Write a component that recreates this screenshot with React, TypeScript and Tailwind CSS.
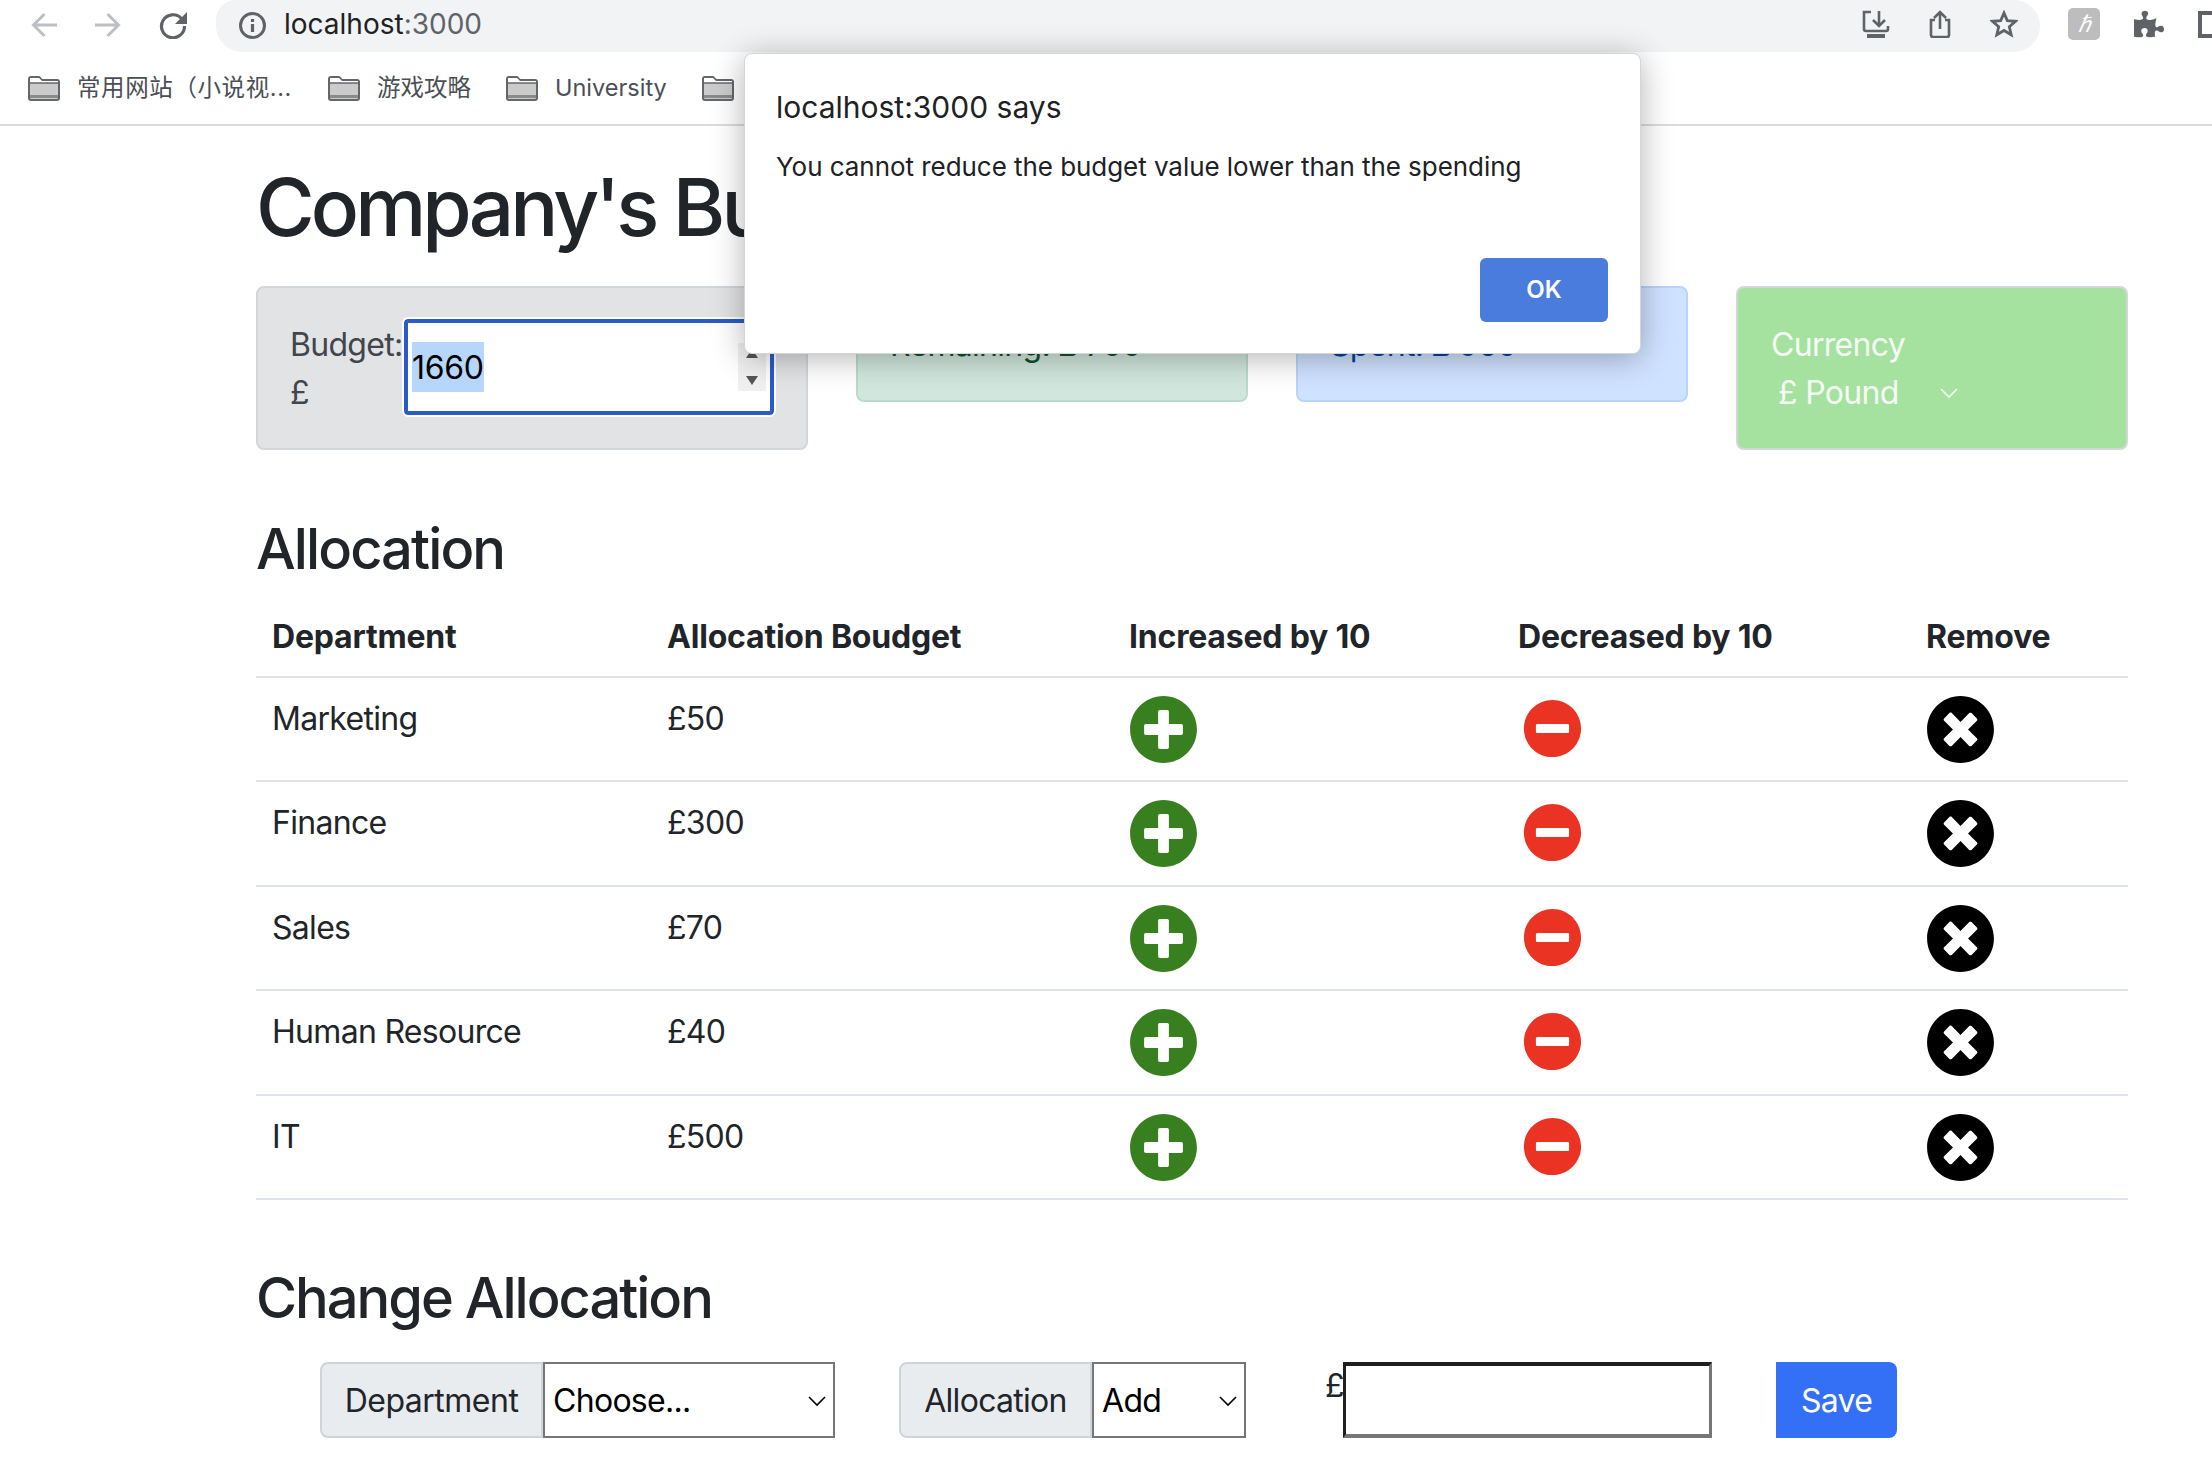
import React from "react";
import { FaPlusCircle, FaMinusCircle, FaTimesCircle, FaPuzzlePiece } from "react-icons/fa";

const rows = [
  { name: "Marketing", budget: 50 },
  { name: "Finance", budget: 300 },
  { name: "Sales", budget: 70 },
  { name: "Human Resource", budget: 40 },
  { name: "IT", budget: 500 },
];

const bookmarks = ["常用网站（小说视...", "游戏攻略", "University", ""];

function FolderIcon() {
  return (
    <svg width="32" height="25" viewBox="0 0 32 25" className="shrink-0">
      <path d="M1 3a2 2 0 0 1 2-2h8l3 3h15a2 2 0 0 1 2 2v16a2 2 0 0 1-2 2H3a2 2 0 0 1-2-2z" fill="#cbcbcb" stroke="#63666a" strokeWidth="2" />
      <path d="M2 2h9l3 3h16v2H2z" fill="#fff" />
      <path d="M1 7h30" stroke="#63666a" strokeWidth="1.5" />
      <path d="M2 20.5h28" stroke="#8a8a8a" strokeWidth="3" />
    </svg>
  );
}

function ChromeArrow({ flip }: { flip?: boolean }) {
  return (
    <svg width="26" height="26" viewBox="0 0 26 26" fill="none" stroke="#bcbfc4" strokeWidth="3" className={flip ? "shrink-0 -scale-x-100" : "shrink-0"}>
      <path d="M26 13H3M13.5 2 2.5 13l11 11" />
    </svg>
  );
}

function ChevronIcon({ className }: { className?: string }) {
  return (
    <svg width="20" height="12" viewBox="0 0 20 12" fill="none" stroke="currentColor" strokeWidth="1.6" className={className}>
      <path d="M2 2l8 8 8-8" />
    </svg>
  );
}

function BrowserBar() {
  return (
    <div className="border-b-2 border-[#dcdcdc]">
      <div className="flex h-[52px] items-center pl-[31px]">
        <div className="-mt-[2px] flex items-center">
          <ChromeArrow />
          <div className="ml-[38px]"><ChromeArrow flip /></div>
          <svg width="28" height="28" viewBox="0 0 28 28" fill="none" className="ml-[38px] shrink-0">
            <path d="M22.5 7.5A11.5 11.5 0 1 0 25.5 15" stroke="#5f6368" strokeWidth="3.2" />
            <path d="M28 1v12H16z" fill="#5f6368" />
          </svg>
        </div>
        <div className="ml-[29px] flex h-[52px] w-[1824px] shrink-0 items-center rounded-b-[40px] rounded-tr-[40px] rounded-tl-[30px] bg-[#f1f3f4] pl-[23px]">
          <svg width="27" height="27" viewBox="0 0 27 27" fill="none" stroke="#5f6368" className="-mt-[2px] shrink-0">
            <circle cx="13.5" cy="13.5" r="12" strokeWidth="3" />
            <path d="M13.5 12v8M13.5 7v3" strokeWidth="3.2" />
          </svg>
          <span className="ml-[18px] -mt-[4px] text-[28px] leading-[36px] tracking-normal">
            <span className="text-[#202124]">localhost</span>
            <span className="text-[#5f6368]">:3000</span>
          </span>
          <div className="ml-auto -mt-[4px] flex items-center gap-[39px] pr-[22px]">
            <svg width="28" height="28" viewBox="0 0 28 28" fill="none" stroke="#5f6368" strokeWidth="2.6">
              <path d="M9 2H2v17a2 2 0 0 0 2 2h20a2 2 0 0 0 2-2v-3" />
              <path d="M17 1v14M11 10l6 6 6-6" />
              <path d="M5 26h18" strokeWidth="4" />
            </svg>
            <svg width="22" height="28" viewBox="0 0 22 28" fill="none" stroke="#5f6368" strokeWidth="2.6">
              <path d="M6 10H2v15a2 2 0 0 0 2 2h14a2 2 0 0 0 2-2V10h-4" />
              <path d="M11 19V2M5 8l6-6 6 6" />
            </svg>
            <svg width="28" height="28" viewBox="0 0 28 28" fill="none" stroke="#5f6368" strokeWidth="2.8">
              <path d="M14 3l3.3 7.6 8.2.7-6.2 5.4 1.9 8.1L14 20.5l-7.2 4.3 1.9-8.1-6.2-5.4 8.2-.7z" />
            </svg>
          </div>
        </div>
        <div className="ml-[28px] -mt-[4px] flex h-[32px] w-[32px] shrink-0 items-center justify-center rounded-[5px] bg-[#bdbdbd] text-[22px] italic text-white">ℏ</div>
        <FaPuzzlePiece size={30} className="ml-[34px] -mt-[4px] shrink-0 text-[#5f6368]" />
        <div className="ml-[34px] -mt-[4px] h-[27px] w-[20px] shrink-0 border-4 border-[#5f6368]" />
      </div>
      <div className="flex h-[72px] items-center pl-[28px]">
        {bookmarks.map((label, i) => (
          <div key={i} className="mr-[35px] flex items-center gap-[17px]">
            <FolderIcon />
            {label && <span className={`whitespace-nowrap text-[23.5px] text-[#4b4f55] ${i === 0 ? "w-[216px] tracking-[0.6px]" : "tracking-[0px]"}`}>{label}</span>}
          </div>
        ))}
      </div>
    </div>
  );
}

function AlertDialog() {
  return (
    <div className="absolute left-[744px] top-[53px] h-[301px] w-[897px] rounded-[8px] border border-[#d5d5d5] bg-white pl-[31px] pr-[32px] pt-[34px] tracking-normal shadow-[0_4px_32px_rgba(0,0,0,0.3)]">
      <div className="text-[30px] leading-[38px] text-[#202124]">localhost:3000 says</div>
      <div className="mt-[23px] text-[26px] leading-[36px] tracking-[-0.05px] text-[#202124]">You cannot reduce the budget value lower than the spending</div>
      <div className="mt-[73px] flex justify-end">
        <button className="h-[64px] w-[128px] rounded-[6px] bg-[#4a7cde] text-[24px] font-semibold text-white">OK</button>
      </div>
    </div>
  );
}

function App() {
  return (
    <div className="relative h-[1480px] w-[2212px] overflow-hidden bg-white text-[32px] leading-[48px] tracking-[-0.7px] text-[#212529] [font-family:Inter,'Noto_Sans_CJK_SC',sans-serif]">
      <BrowserBar />
      <main className="pl-[256px] pt-[33px]">
        <h1 className="whitespace-nowrap text-[80px] font-medium leading-[96px] tracking-[-3.9px]">Company's Budget allocation</h1>

        <div className="mt-[31px] flex items-start gap-[48px]">
          <div className="flex h-[164px] w-[552px] rounded-[8px] border-2 border-[#d3d6d8] bg-[#e2e3e5] py-[31px] pl-[32px] pr-[32px] text-[#41464b]">
            <div className="w-[114px] shrink-0 pt-[2px]">Budget:<br />£</div>
            <div className="flex h-[96px] w-[370px] items-center justify-between rounded-[4px] border-[4px] border-[#2a5cc7] bg-white pl-[4px] pr-[4px] text-black tracking-[-0.3px] outline-2 outline-white">
              <span className="bg-[#b7d6fb] pt-[2px]">1660</span>
              <div className="flex h-[48px] w-[28px] flex-col items-center justify-between bg-[#f0f0f0] py-[6px]">
                <div className="h-0 w-0 border-x-[6px] border-b-[9px] border-x-transparent border-b-[#555]" />
                <div className="h-0 w-0 border-x-[6px] border-t-[9px] border-x-transparent border-t-[#555]" />
              </div>
            </div>
          </div>
          <div className="h-[116px] w-[392px] rounded-[8px] border-2 border-[#badbcc] bg-[#d1e7dd] px-[32px] py-[33px] text-[#0f5132]">Remaining: £ 700</div>
          <div className="h-[116px] w-[392px] rounded-[8px] border-2 border-[#b6d4fe] bg-[#cfe2ff] px-[32px] py-[33px] text-[#084298]">Spent: £ 960</div>
          <div className="h-[164px] w-[392px] rounded-[8px] border-2 border-[#d3d6d8] bg-[#a5e2a0] px-[33px] py-[33px] text-[#f6fbf5]">
            <div>Currency</div>
            <div className="flex items-center pl-[7px]">
              £ Pound
              <ChevronIcon className="ml-[40px]" />
            </div>
          </div>
        </div>

        <h3 className="mt-[66px] text-[56px] font-medium leading-[67px] tracking-[-1.9px]">Allocation</h3>

        <table className="mt-[15px] w-[1872px] table-fixed border-collapse">
          <thead>
            <tr className="border-b-2 border-[#dee2e6] text-left tracking-[-0.2px]">
              <th className="w-[395px] px-[16px] py-[15px] font-bold">Department</th>
              <th className="w-[462px] px-[16px] py-[15px] font-bold">Allocation Boudget</th>
              <th className="w-[389px] px-[16px] py-[15px] font-bold">Increased by 10</th>
              <th className="w-[408px] px-[16px] py-[15px] font-bold">Decreased by 10</th>
              <th className="px-[16px] py-[15px] font-bold">Remove</th>
            </tr>
          </thead>
          <tbody>
            {rows.map((r) => (
              <tr key={r.name} className="h-[104.4px] border-b-2 border-[#dee2e6] align-top">
                <td className="px-[16px] pb-[16px] pt-[17px]">{r.name}</td>
                <td className="px-[16px] pb-[16px] pt-[17px]">£{r.budget}</td>
                <td className="px-[16px] pb-[15px] pt-[17px]"><FaPlusCircle size={69} className="text-[#38801f]" /></td>
                <td className="px-[16px] py-[21px]"><FaMinusCircle size={59} className="ml-[5px] text-[#ea3323]" /></td>
                <td className="px-[16px] pb-[15px] pt-[17px]"><FaTimesCircle size={69} className="text-black" /></td>
              </tr>
            ))}
          </tbody>
        </table>

        <h3 className="mt-[65px] text-[56px] font-medium leading-[67px] tracking-[-2px]">Change Allocation</h3>

        <div className="mt-[30px] flex h-[76px] items-stretch pl-[64px]">
          <div className="flex w-[223px] items-center justify-center rounded-l-[8px] border-2 border-[#ced4da] bg-[#e9ecef] pt-[2px] tracking-[-0.5px]">Department</div>
          <div className="flex w-[292px] items-center justify-between border-2 border-[#767676] bg-white pl-[8px] pr-[6px] pt-[2px] text-black">
            Choose...
            <ChevronIcon />
          </div>
          <div className="ml-[64px] flex w-[193px] items-center justify-center rounded-l-[8px] border-2 border-[#ced4da] bg-[#e9ecef] pt-[2px] tracking-[-0.7px]">Allocation</div>
          <div className="flex w-[154px] items-center justify-between border-2 border-[#767676] bg-white pl-[8px] pr-[6px] pt-[2px] text-black">
            Add
            <ChevronIcon />
          </div>
          <div className="ml-[79px] w-[18px] whitespace-nowrap">£</div>
          <div className="w-[369px] border-x-[3px] border-y-[4px] border-b-[#767676] border-l-[#1f1f1f] border-r-[#767676] border-t-[#1f1f1f] bg-white" />
          <button className="ml-[64px] w-[121px] rounded-r-[8px] bg-[#3470f5] pt-[2px] text-white">Save</button>
        </div>
      </main>
      <AlertDialog />
    </div>
  );
}

export default App;
